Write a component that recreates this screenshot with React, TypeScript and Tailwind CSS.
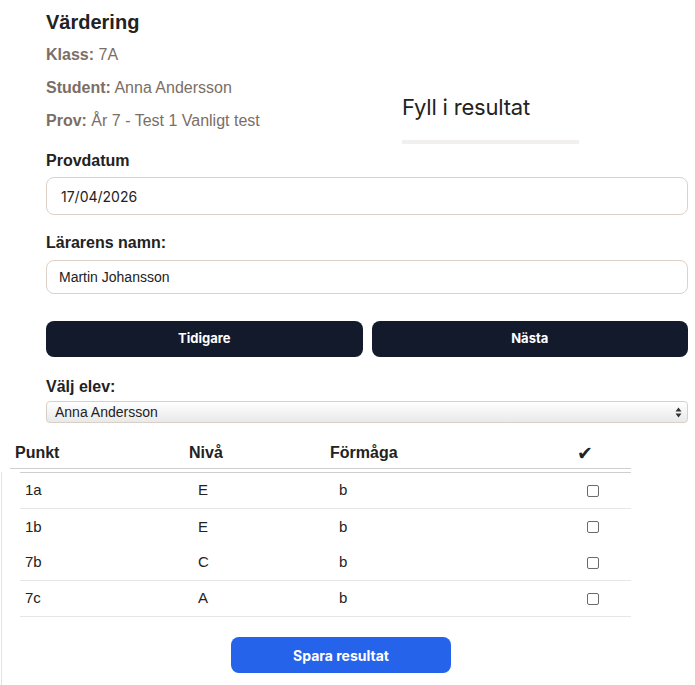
import { useState } from 'react'

const rows = [
  { punkt: '1a', niva: 'E', formaga: 'b', line: true },
  { punkt: '1b', niva: 'E', formaga: 'b', line: false },
  { punkt: '7b', niva: 'C', formaga: 'b', line: true },
  { punkt: '7c', niva: 'A', formaga: 'b', line: true },
]

export default function App() {
  const [checked, setChecked] = useState<Record<string, boolean>>({})

  return (
    <div className="w-[695px] h-[685px] bg-white overflow-hidden font-['Liberation_Sans',Arial,sans-serif] text-[#222]">
      <div className="pl-[46px] pr-[7px] pt-[10px]">
        {/* Top info + title */}
        <div className="flex">
          <div className="w-[356px]">
            <h2 className="text-[20px] leading-[24px] font-bold text-[#222]">Värdering</h2>
            <p className="mt-[11px] text-[16px] leading-[20px] text-[#7a6e66]">
              <span className="font-bold">Klass:</span> 7A
            </p>
            <p className="mt-[13px] text-[16px] leading-[20px] text-[#7a6e66]">
              <span className="font-bold">Student:</span> Anna Andersson
            </p>
            <p className="mt-[13px] text-[16px] leading-[20px] text-[#7a6e66]">
              <span className="font-bold">Prov:</span> År 7 - Test 1 Vanligt test
            </p>
          </div>
          <div className="pt-[83px]">
            <div className="font-['Inter',sans-serif] text-[22px] leading-[28px] text-[#222] tracking-[-0.2px]">
              Fyll i resultat
            </div>
            <div className="mt-[19px] w-[177px] h-[4px] bg-[#f2f0ee]" />
          </div>
        </div>

        {/* Provdatum */}
        <label className="block mt-[7px] text-[16px] leading-[20px] font-bold">Provdatum</label>
        <div className="mt-[6px] h-[38px] border border-[#ddd1c8] rounded-lg flex items-center pl-[14px] font-['Inter',sans-serif] text-[14px] text-[#222]">
          17/04/2026
        </div>

        {/* Lärarens namn */}
        <label className="block mt-[18px] text-[16px] leading-[20px] font-bold">Lärarens namn:</label>
        <div className="mt-[7px] h-[34px] border border-[#ddd1c8] rounded-lg flex items-center pl-[12px] text-[14px] text-[#222]">
          Martin Johansson
        </div>

        {/* Nav buttons */}
        <div className="mt-[27px] flex gap-[9px]">
          <button className="flex-1 h-[36px] rounded-lg bg-[#131a2b] text-white font-['Inter',sans-serif] font-bold text-[13px]">
            Tidigare
          </button>
          <button className="flex-1 h-[36px] rounded-lg bg-[#131a2b] text-white font-['Inter',sans-serif] font-bold text-[13px]">
            Nästa
          </button>
        </div>

        {/* Välj elev */}
        <label className="block mt-[20px] text-[16px] leading-[20px] font-bold">Välj elev:</label>
        <div className="mt-[4px] h-[22px] border border-[#d9cfc7] rounded-[4px] bg-gradient-to-b from-white to-[#e9e9e9] flex items-center justify-between pl-[8px] pr-[5px] text-[14px] text-[#222]">
          <span>Anna Andersson</span>
          <svg width="7" height="11" viewBox="0 0 7 11" fill="#333">
            <path d="M3.5 0.5 L6.5 4.5 H0.5 Z" />
            <path d="M3.5 10.5 L6.5 6.5 H0.5 Z" />
          </svg>
        </div>
      </div>

      {/* Table header */}
      <div className="mt-[15px] ml-[10px] w-[621px] h-[31px] grid grid-cols-[174px_141px_247px_54px] items-center pl-[5px] border-b border-[#cfcfcf] text-[16px] font-bold text-[#222]">
        <div>Punkt</div>
        <div>Nivå</div>
        <div>Förmåga</div>
        <div className="font-['DejaVu_Sans',sans-serif] text-[19px] leading-none">✔</div>
      </div>

      {/* Body + save */}
      <div className="mt-[3px] ml-[1px] border-l border-[#e8e2dd] h-[220px]">
        <div className="ml-[18px] w-[611px] border-t border-[#cfcfcf]">
          {rows.map((r) => (
            <div
              key={r.punkt}
              className={`h-[36px] grid grid-cols-[173px_141px_248px_49px] items-center pl-[5px] text-[15px] text-[#222] ${
                r.line ? 'border-b border-[#e6e6e6]' : ''
              }`}
            >
              <div>{r.punkt}</div>
              <div>{r.niva}</div>
              <div>{r.formaga}</div>
              <div>
                <button
                  onClick={() => setChecked({ ...checked, [r.punkt]: !checked[r.punkt] })}
                  className="block w-[12px] h-[12px] border border-[#6b6b6b] rounded-[2px] bg-white"
                />
              </div>
            </div>
          ))}
        </div>
        <button className="mt-[20px] ml-[229px] w-[220px] h-[36px] rounded-lg bg-[#2563eb] text-white font-['Inter',sans-serif] font-bold text-[14px]">
          Spara resultat
        </button>
      </div>
    </div>
  )
}
